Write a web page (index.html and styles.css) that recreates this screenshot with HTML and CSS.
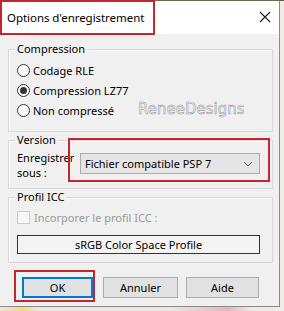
FILE: index.html
```html
<!DOCTYPE html>
<html lang="fr">
<head>
<meta charset="utf-8">
<title>Options d'enregistrement</title>
<link rel="stylesheet" href="styles.css">
</head>
<body>
<div class="page">
  <div class="dialog">
    <div class="titlebar">
      <span class="title">Options d'enregistrement</span>
      <svg class="close" width="12" height="12" viewBox="0 0 12 12"><path d="M1 1 L11 11 M11 1 L1 11" stroke="#1a1a1a" stroke-width="1.1" fill="none"/></svg>
    </div>
    <div class="content">
      <div class="group g1">
        <span class="legend">Compression</span>
        <div class="radio-row"><span class="radio"></span><span>Codage RLE</span></div>
        <div class="radio-row"><span class="radio checked"></span><span>Compression LZ77</span></div>
        <div class="radio-row"><span class="radio"></span><span>Non compressé</span></div>
        <span class="watermark">ReneeDesigns</span>
      </div>
      <div class="group g2">
        <span class="legend">Version</span>
        <div class="version-row">
          <span class="field-label">Enregistrer<br>sous :</span>
          <div class="select">
            <span>Fichier compatible PSP 7</span>
            <svg class="chev" width="10" height="6" viewBox="0 0 10 6"><path d="M1 1 L5 5 L9 1" stroke="#555" stroke-width="1" fill="none"/></svg>
          </div>
        </div>
      </div>
      <div class="group g3">
        <span class="legend">Profil ICC</span>
        <div class="check-row"><span class="checkbox"></span><span class="disabled">Incorporer le profil ICC :</span></div>
        <div class="profile-btn">sRGB Color Space Profile</div>
      </div>
      <div class="buttons">
        <div class="btn ok">OK</div>
        <div class="btn cancel">Annuler</div>
        <div class="btn help">Aide</div>
      </div>
    </div>
    <div class="mark mark-title"></div>
    <div class="mark mark-version"></div>
    <div class="mark mark-ok"></div>
  </div>
</div>
</body>
</html>
```
FILE: styles.css
```css
* { box-sizing: border-box; }
html, body { margin: 0; padding: 0; }
body {
  width: 284px;
  height: 311px;
  overflow: hidden;
  font-family: "Noto Sans", "Open Sans", sans-serif;
  font-size: 11px;
  color: #000;
  background: linear-gradient(90deg, #efe6cf 0%, #f3d98a 8%, #efe8da 14%, #ede6dc 60%, #e7b7b8 80%, #efe8dd 88%, #f1ede6 100%);
}
.page {
  width: 284px;
  height: 311px;
  background: linear-gradient(180deg, #5d5a44 0px, #5d5a44 1px, transparent 1px);
}
.dialog {
  position: relative;
  width: 280px;
  height: 307px;
  background: #f0f0f0;
  border-right: 1px solid #8a8a8a;
  border-bottom: 1px solid #8a8a8a;
  display: flex;
  flex-direction: column;
  border-top: 1px solid #6b6750;
}
.titlebar {
  height: 33px;
  background: #ffffff;
  display: flex;
  align-items: center;
  justify-content: space-between;
  padding: 0 8px 1px 7px;
}
.title {
  font-size: 11.5px;
  letter-spacing: -0.05px;
}
.content {
  display: flex;
  flex-direction: column;
  padding: 15px 0 0 8px;
}
.group {
  position: relative;
  width: 265px;
  border: 1px solid #d9d9d9;
  box-shadow: inset 1px 1px 0 #fbfbfb;
}
.legend {
  position: absolute;
  top: -9px;
  left: 6px;
  padding: 0 2px;
  background: #f0f0f0;
  line-height: 16px;
}
.g1 { height: 83px; padding: 10px 0 0 8px; }
.g2 { height: 49px; margin-top: 8px; padding: 9px 0 0 8px; }
.g3 { height: 66px; margin-top: 8px; padding: 9px 0 0 8px; }
.radio-row, .check-row {
  display: flex;
  align-items: center;
  height: 20px;
  gap: 3px;
}
.radio {
  width: 13px;
  height: 13px;
  border: 1px solid #333;
  border-radius: 50%;
  background: #fff;
  display: flex;
  align-items: center;
  justify-content: center;
}
.radio.checked::after {
  content: "";
  width: 7px;
  height: 7px;
  border-radius: 50%;
  background: #333;
}
.watermark {
  position: absolute;
  left: 129px;
  top: 50px;
  font-family: "DejaVu Sans Condensed", "DejaVu Sans", sans-serif;
  font-size: 16.5px;
  line-height: 18px;
  color: #fbfbfb;
  -webkit-text-stroke: 0.5px #8c8c8c;
  letter-spacing: 0.1px;
}
.version-row {
  display: flex;
  align-items: flex-start;
}
.field-label {
  width: 63px;
  line-height: 15px;
}
.select {
  margin-top: 3px;
  width: 180px;
  height: 21px;
  background: #e5e5e5;
  border: 1px solid #adadad;
  display: flex;
  align-items: center;
  justify-content: space-between;
  padding: 0 6px 0 4px;
}
.checkbox {
  width: 13px;
  height: 13px;
  border: 1px solid #cccccc;
  background: #f7f7f7;
}
.disabled { color: #9a9a9a; margin-left: 1px; }
.profile-btn {
  margin-top: 8px;
  width: 243px;
  height: 19px;
  border: 1px solid #333;
  background: #f4f4f4;
  display: flex;
  align-items: center;
  justify-content: center;
}
.buttons {
  display: flex;
  margin-top: 14px;
  padding-left: 14px;
  height: 21px;
}
.btn {
  height: 21px;
  background: #e1e1e1;
  border: 1px solid #adadad;
  display: flex;
  align-items: center;
  justify-content: center;
}
.ok { width: 71px; border: 2px solid #0078d7; }
.cancel { width: 75px; margin-left: 10px; }
.help { width: 73px; margin-left: 8px; }
.mark {
  position: absolute;
  border: 2px solid #c1272d;
}
.mark-title { left: 0; top: -1px; width: 155px; height: 35px; }
.mark-version { left: 68px; top: 137px; width: 202px; height: 44px; }
.mark-ok { left: 14px; top: 269px; width: 81px; height: 32px; }
```
